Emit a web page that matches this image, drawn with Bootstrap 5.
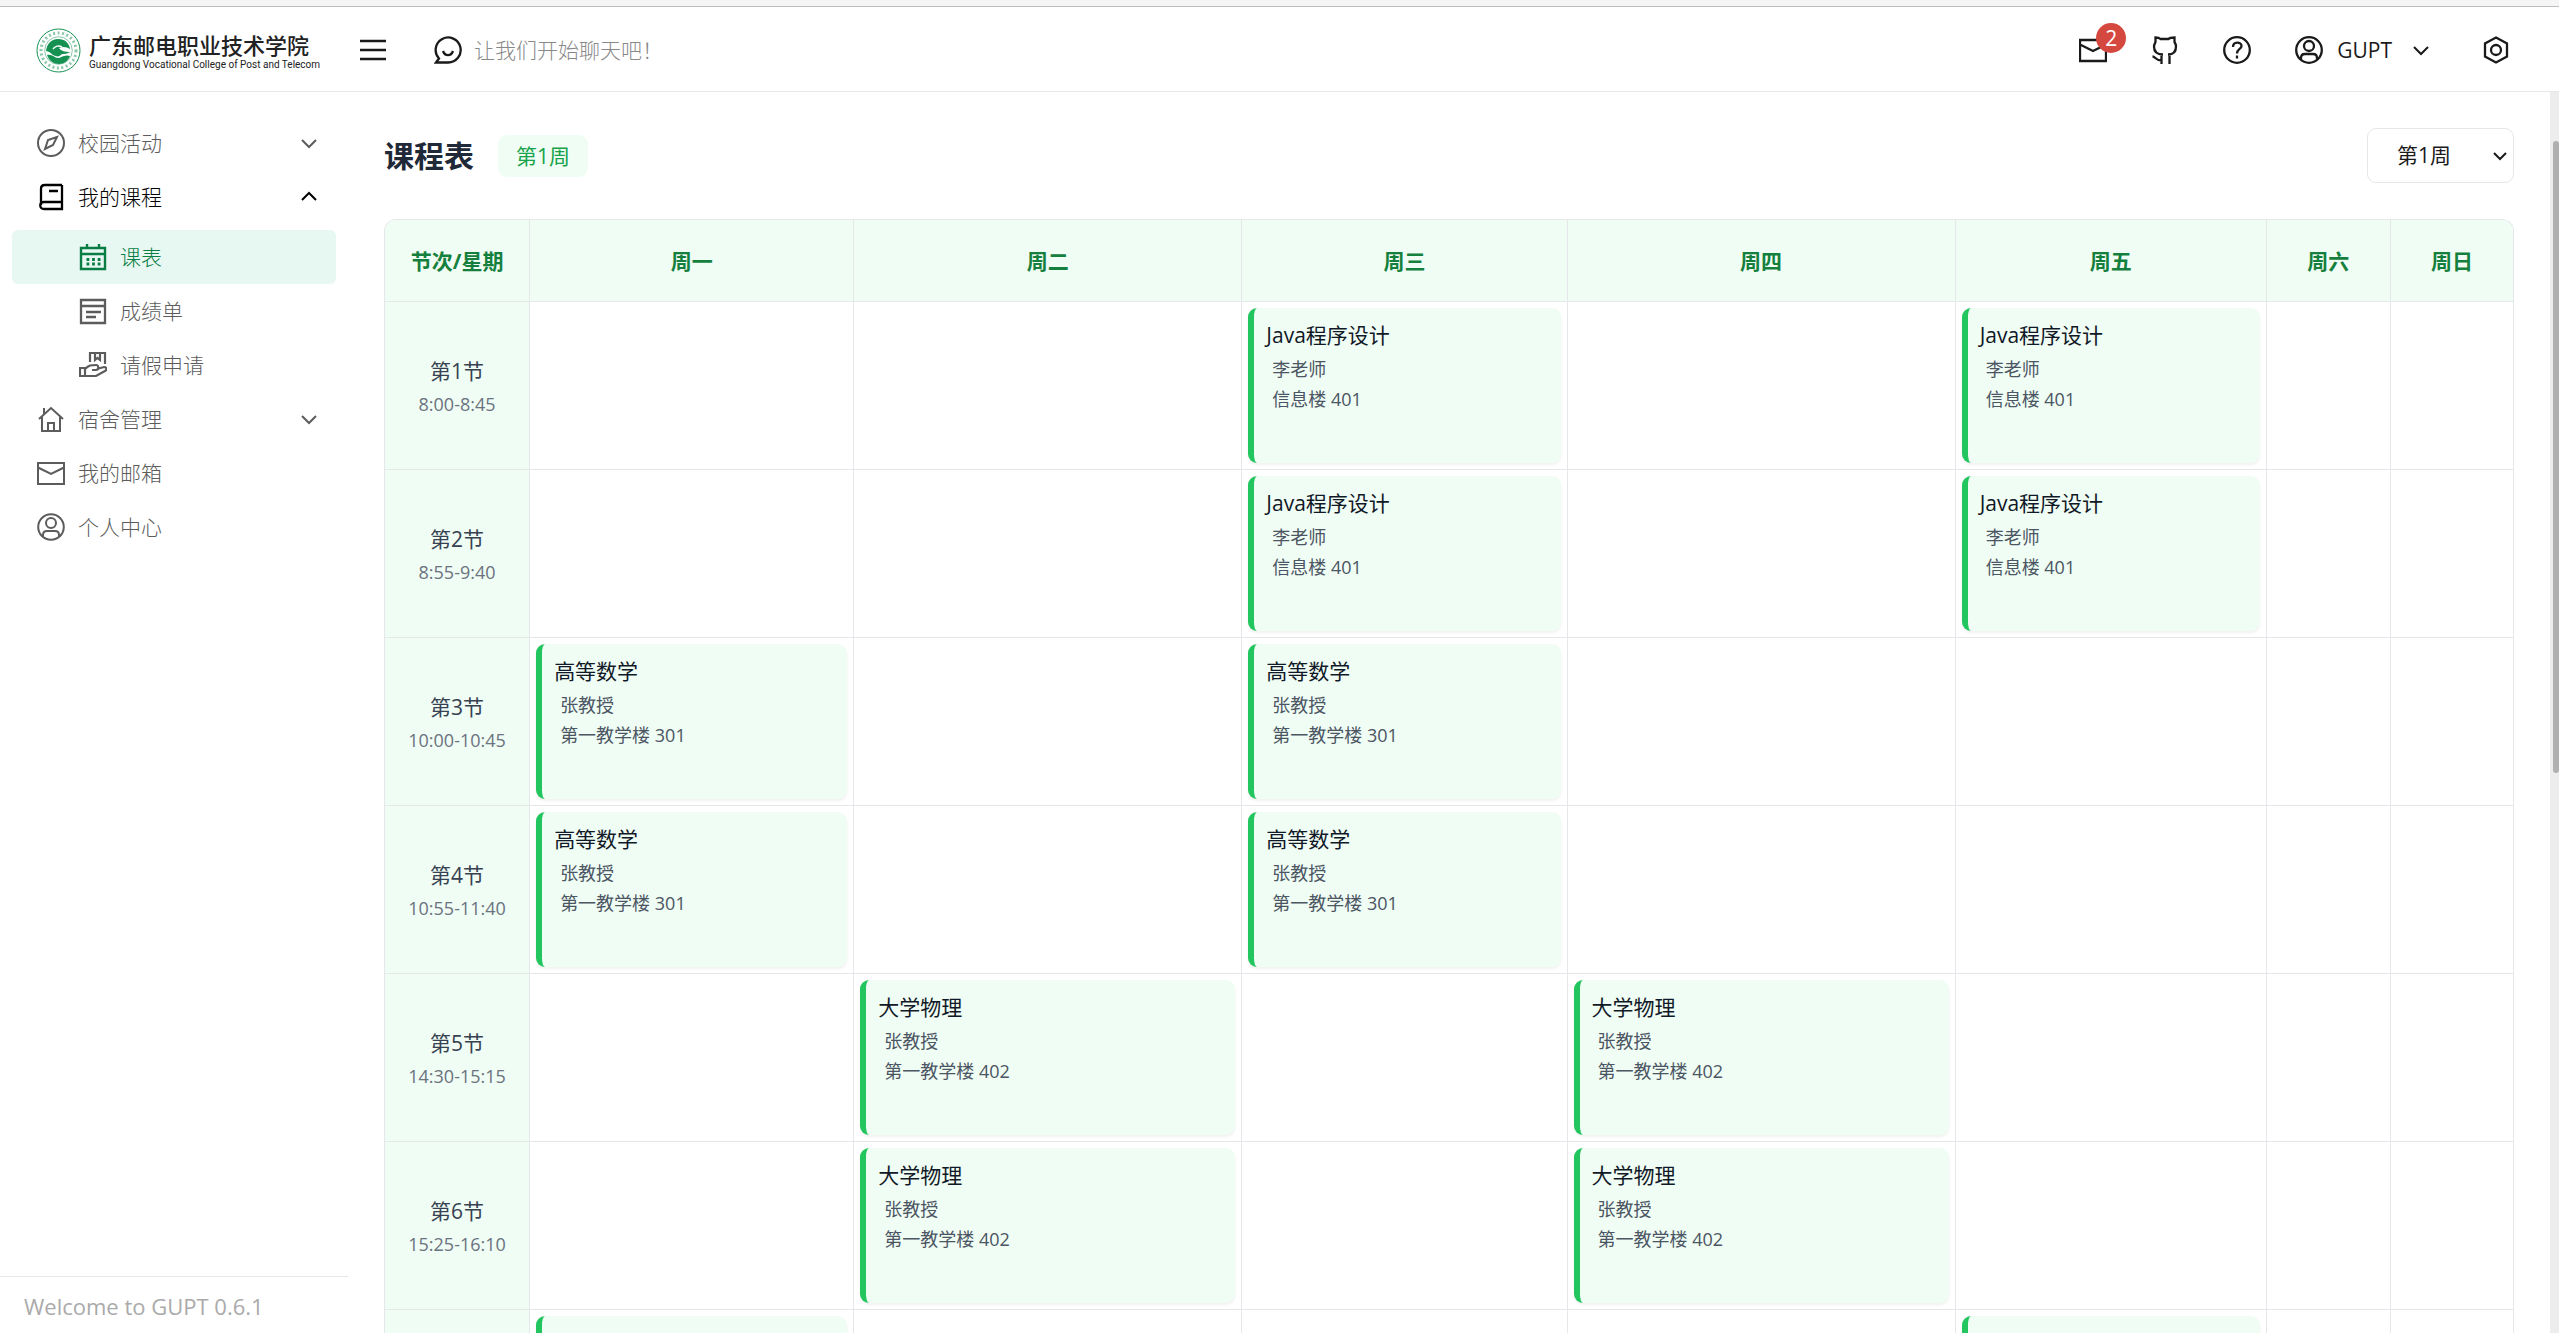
<!DOCTYPE html>
<html lang="zh-CN">
<head>
<meta charset="utf-8">
<meta name="viewport" content="width=device-width, initial-scale=1">
<title>课程表 - GUPT</title>
<link rel="stylesheet" href="https://cdn.jsdelivr.net/npm/bootstrap@5.3.0/dist/css/bootstrap.min.css">
<style>
:root{--ink:#1a1a1a;--line:#e5e7eb;--mint:#f0fdf4;--leaf:#15803d}
body{font-family:"Open Sans","Noto Sans CJK SC",sans-serif;font-size:21px;line-height:30px;font-weight:400;color:var(--ink);background:#fff}
svg{display:block;flex:none;fill:none;stroke:currentColor;stroke-width:2}
.ic{width:28px;height:28px}
.chev{width:18px;height:18px}
.strip{height:7px;background:#f5f5f5;border-bottom:1px solid #bdbdbd}
.topbar{height:85px;border-bottom:1px solid var(--line);padding:2px 49px 0 36px}
.topbar .btn{color:var(--ink);border:0;padding:0;font-size:21px;line-height:30px;border-radius:6px}
.topbar .ic{stroke-width:2.3}
.school{color:#222;text-decoration:none}
.school-zh{font-family:"Noto Sans CJK SC",sans-serif;font-size:22px;line-height:30px;font-weight:500}
.school-en{font-family:Roboto,sans-serif;font-size:10px;line-height:12px}
.burger{margin-left:40px}
.chat{gap:12px}
.hint{color:#888;font-weight:300}
.tools{gap:44px}
.acct{margin:0 20px 0 14px}
.count{position:absolute;left:17px;top:-13px;width:30px;height:30px;border-radius:50%;background:#d5483f;color:#fff;font-size:21px;line-height:30px;text-align:center}
.side{width:348px;padding:24px 0 0}
.side .nav{padding:0 12px}
.side .nav-link{height:54px;padding:0 18px 0 25px;color:#5c5c5c;font-size:21px;font-weight:300;border-radius:6px;gap:13px}
.side .nav-link.open{color:#000}
.sub{padding-top:6px}
.side .sub .nav-link{padding-left:67px}
.side .nav-link.active{background:#e7f7f1;color:#0a7d45}
.foot{border-top:1px solid var(--line);color:#aaa;padding:14px 24px 12px;font-size:22px}
.main{padding:36px 36px 0}
h1{font-size:30px;line-height:36px;font-weight:700;color:#1f2937}
.pill{background:var(--mint);color:#16a34a;border-radius:9px;height:42px;padding:6px 18px}
.week{width:147px;height:55px;border:1px solid var(--line);border-radius:9px;font-size:21px;color:var(--ink);padding:0 29px;
background:#fff url("data:image/svg+xml,%3Csvg xmlns='http://www.w3.org/2000/svg' viewBox='0 0 14 14'%3E%3Cpath d='M1 4l6 6 6-6' fill='none' stroke='%231a1a1a' stroke-width='2'/%3E%3C/svg%3E") no-repeat right 6px center/14px}
.board{border:1px solid var(--line);border-bottom:0;border-radius:12px 12px 0 0;overflow:hidden;margin-top:36px}
.plan{table-layout:fixed;width:100%;border-collapse:separate;border-spacing:0}
.c-time{width:6.82%}.c-mon{width:15.23%}.c-tue{width:18.24%}.c-wed{width:15.28%}.c-thu{width:18.24%}.c-fri{width:14.62%}.c-sat{width:5.83%}
.plan th,.plan td{border-right:1px solid var(--line);border-bottom:1px solid var(--line);padding:6px}
.plan tr>:last-child{border-right:0}
.plan thead th{height:82px;background:var(--mint);color:var(--leaf);font-weight:700;text-align:center}
.plan tbody tr{height:168px}
.plan tbody th{background:var(--mint);text-align:center;vertical-align:middle;color:#374151;font-weight:400;padding:10px 0 6px}
.plan td{vertical-align:top}
.clock{display:block;font-size:18px;color:#6b7280;margin-top:3px}
.lesson{height:155px;border-left:6px solid #22c55e;border-radius:9px;background:var(--mint);padding:12px;box-shadow:0 2px 3px rgba(0,0,0,.06);color:#111827}
.lesson b{display:block;font-weight:400;margin-bottom:4px}
.lesson p{margin:0;padding-left:6px;font-size:18px;color:#4b5563}
.rail{width:10px;background:#ededed;padding-top:49px}
.thumb{width:6px;height:53%;background:#b0b0b0;border-radius:3px;margin-left:3px}
</style>
<script src="https://cdn.jsdelivr.net/npm/bootstrap@5.3.0/dist/js/bootstrap.bundle.min.js"></script>
</head>
<body class="vh-100 overflow-hidden d-flex flex-column">
<svg class="d-none">
 <symbol id="down" viewBox="0 0 18 18"><path d="M2 6l7 7 7-7"/></symbol>
 <symbol id="mail" viewBox="0 0 28 28"><path d="M1 4h26v21H1zM1 8.500l13 6.500 13-6.500"/></symbol>
 <symbol id="user" viewBox="0 0 28 28"><circle cx="14" cy="14" r="12.800"/><circle cx="14" cy="10" r="5"/><path d="M6 24v-2c0-3 2-4 4-4h8c2 0 4 1 4 4v2"/></symbol>
</svg>
<div class="strip flex-shrink-0"></div>
<header class="topbar d-flex align-items-center justify-content-between flex-shrink-0">
 <div class="d-flex align-items-center">
  <a class="school d-flex align-items-center gap-2" href="#">
   <svg width="45" height="45" viewBox="0 0 45 45" style="color:#159152"><circle cx="22.500" cy="22.500" r="21.500" stroke-width="1"/><circle cx="22.500" cy="22.500" r="17.500" stroke-width="3" stroke-dasharray="2 2.500" opacity=".5"/><circle cx="22.500" cy="22.500" r="13.800" stroke-width=".7" opacity=".7"/><path d="M10 23c1-8 6-12 12-12 7 0 11 4 12 10-3-2-7-3-11-1 2 3 6 4 11 4-3 2-6 2-8 2-2 2-4 3-6 2-4 0-4-4-10-5zM11 27c5-1 8 3 11 3s6-4 12-2c-2 5-6 8-11 8s-10-3-12-9z" fill="currentColor" stroke="none"/><path d="M17 21c2-3 6-4 9-2" stroke="#fff" stroke-width="1.500"/></svg>
   <span><span class="school-zh d-block">广东邮电职业技术学院</span><span class="school-en d-block">Guangdong Vocational College of Post and Telecom</span></span>
  </a>
  <button class="burger btn" aria-label="菜单"><svg width="26" height="28" viewBox="0 0 26 28"><path d="M0 5h26M0 14h26M0 23h26" stroke-width="2.500"/></svg></button>
  <button class="chat btn ms-5 d-flex align-items-center"><svg class="ic" viewBox="0 0 28 28"><path d="M2 26.500l3-4A12.500 12.500 0 1 1 14 26.500zM9 15c2 5.500 8 5.500 10 0"/></svg><span class="hint">让我们开始聊天吧！</span></button>
 </div>
 <div class="tools d-flex align-items-center">
  <button class="btn position-relative" aria-label="消息"><svg class="ic"><use href="#mail"/></svg><span class="count">2</span></button>
  <button class="btn" aria-label="GitHub"><svg class="ic" viewBox="0 0 28 28"><path d="M10.500 28v-9M18.500 28v-9M1.500 20.500c3 0 3 4 9 4M12 18.500c-6 0-9-3-9-8 0-2 1-3 1.500-4.500V1.500c2 0 4 .5 5 1.500h8c1-1 3-1.500 6-1.500V6c1 1.500 1.500 2.500 1.500 4.500 0 5-3 8-8 8"/></svg></button>
  <button class="btn" aria-label="帮助"><svg class="ic" viewBox="0 0 28 28"><circle cx="14" cy="14" r="12.800"/><path d="M10 11c0-6 8.500-5.500 8.500-1 0 3-4.500 3-4.500 7.500M14 19.500v3"/></svg></button>
  <button class="btn d-flex align-items-center"><svg class="ic"><use href="#user"/></svg><span class="acct">GUPT</span><svg class="chev"><use href="#down"/></svg></button>
  <button class="btn ms-2" aria-label="设置"><svg class="ic" viewBox="0 0 28 28"><path d="M14 1.500l11 6v13l-11 6-11-6v-13z"/><circle cx="14" cy="14" r="5"/></svg></button>
 </div>
</header>
<div class="d-flex flex-grow-1 overflow-hidden">
 <aside class="side d-flex flex-column justify-content-between flex-shrink-0">
  <nav class="nav flex-column">
   <a class="nav-link d-flex align-items-center" href="#"><svg class="ic" viewBox="0 0 28 28"><circle cx="14" cy="14" r="13"/><path d="M20 8l-4 8-8 4 3-9z"/></svg><span class="flex-grow-1">校园活动</span><svg class="chev"><use href="#down"/></svg></a>
   <a class="nav-link open d-flex align-items-center" href="#"><svg class="ic" viewBox="0 0 28 28"><path d="M25 2v24H7c-5 0-5-7 0-7h18M4 22V6c0-3 1-4 4-4h17M12 8h9" stroke-width="2.300"/></svg><span class="flex-grow-1">我的课程</span><svg class="chev" viewBox="0 0 18 18"><path d="M2 12l7-7 7 7"/></svg></a>
   <div class="sub">
    <a class="nav-link active d-flex align-items-center" href="#"><svg class="ic" viewBox="0 0 28 28"><path d="M2 5h24v21H2zM2 11h24M8 1v4M20 1v4" stroke-width="2.400"/><path d="M7.500 16.500h14M7.500 21h14" stroke-dasharray="2.800 2.800" stroke-width="2.800"/></svg>课表</a>
    <a class="nav-link d-flex align-items-center" href="#"><svg class="ic" viewBox="0 0 28 28"><path d="M2 3h24v23H2zM2 9h24M7 15h15M7 20h10" stroke-width="2.300"/></svg>成绩单</a>
    <a class="nav-link d-flex align-items-center" href="#"><svg class="ic" viewBox="0 0 28 28"><path d="M11 11V2h15v11M16 2v7l2.500-2 2.500 2V2M1 17h5v8H1zM6 18c4-4 6-4 11-4 3 0 3 5 0 5h-4M18 18l7-2c3 0 3 3 1 4l-9 5H6" stroke-width="2.200"/></svg>请假申请</a>
   </div>
   <a class="nav-link d-flex align-items-center" href="#"><svg class="ic" viewBox="0 0 28 28"><path d="M2 14L14 3l12 11M5 12v14h18V12M7 9V3M11 26v-8h6v8"/></svg><span class="flex-grow-1">宿舍管理</span><svg class="chev"><use href="#down"/></svg></a>
   <a class="nav-link d-flex align-items-center" href="#"><svg class="ic"><use href="#mail"/></svg>我的邮箱</a>
   <a class="nav-link d-flex align-items-center" href="#"><svg class="ic"><use href="#user"/></svg>个人中心</a>
  </nav>
  <div class="foot">Welcome to GUPT 0.6.1</div>
 </aside>
 <main class="main flex-grow-1 overflow-hidden">
  <div class="d-flex align-items-center justify-content-between">
   <div class="d-flex align-items-center gap-4"><h1 class="m-0">课程表</h1><span class="pill">第1周</span></div>
   <select class="week form-select" aria-label="选择周"><option>第1周</option></select>
  </div>
  <div class="board">
   <table class="plan">
    <colgroup><col class="c-time"><col class="c-mon"><col class="c-tue"><col class="c-wed"><col class="c-thu"><col class="c-fri"><col class="c-sat"><col></colgroup>
    <thead><tr><th scope="col">节次/星期</th><th scope="col">周一</th><th scope="col">周二</th><th scope="col">周三</th><th scope="col">周四</th><th scope="col">周五</th><th scope="col">周六</th><th scope="col">周日</th></tr></thead>
    <tbody>
     <tr><th scope="row">第1节<span class="clock">8:00-8:45</span></th><td></td><td></td>
      <td><div class="lesson"><b>Java程序设计</b><p>李老师</p><p>信息楼 401</p></div></td><td></td>
      <td><div class="lesson"><b>Java程序设计</b><p>李老师</p><p>信息楼 401</p></div></td><td></td><td></td></tr>
     <tr><th scope="row">第2节<span class="clock">8:55-9:40</span></th><td></td><td></td>
      <td><div class="lesson"><b>Java程序设计</b><p>李老师</p><p>信息楼 401</p></div></td><td></td>
      <td><div class="lesson"><b>Java程序设计</b><p>李老师</p><p>信息楼 401</p></div></td><td></td><td></td></tr>
     <tr><th scope="row">第3节<span class="clock">10:00-10:45</span></th>
      <td><div class="lesson"><b>高等数学</b><p>张教授</p><p>第一教学楼 301</p></div></td><td></td>
      <td><div class="lesson"><b>高等数学</b><p>张教授</p><p>第一教学楼 301</p></div></td><td></td><td></td><td></td><td></td></tr>
     <tr><th scope="row">第4节<span class="clock">10:55-11:40</span></th>
      <td><div class="lesson"><b>高等数学</b><p>张教授</p><p>第一教学楼 301</p></div></td><td></td>
      <td><div class="lesson"><b>高等数学</b><p>张教授</p><p>第一教学楼 301</p></div></td><td></td><td></td><td></td><td></td></tr>
     <tr><th scope="row">第5节<span class="clock">14:30-15:15</span></th><td></td>
      <td><div class="lesson"><b>大学物理</b><p>张教授</p><p>第一教学楼 402</p></div></td><td></td>
      <td><div class="lesson"><b>大学物理</b><p>张教授</p><p>第一教学楼 402</p></div></td><td></td><td></td><td></td></tr>
     <tr><th scope="row">第6节<span class="clock">15:25-16:10</span></th><td></td>
      <td><div class="lesson"><b>大学物理</b><p>张教授</p><p>第一教学楼 402</p></div></td><td></td>
      <td><div class="lesson"><b>大学物理</b><p>张教授</p><p>第一教学楼 402</p></div></td><td></td><td></td><td></td></tr>
     <tr><th scope="row"></th>
      <td><div class="lesson"></div></td><td></td><td></td><td></td>
      <td><div class="lesson"></div></td><td></td><td></td></tr>
    </tbody>
   </table>
  </div>
 </main>
 <div class="rail"><div class="thumb"></div></div>
</div>
</body>
</html>
